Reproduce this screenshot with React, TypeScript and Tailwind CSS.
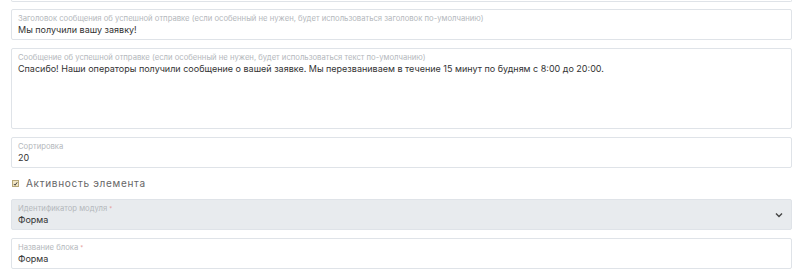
import React from "react";

function Field({ label, value, required, bg = "bg-white", tall = false, select = false }: { label: string; value: string; required?: boolean; bg?: string; tall?: boolean; select?: boolean }) {
  return (
    <div className={`relative border border-[#dfe3e8] rounded-[2px] ${bg} px-[6px] pt-[3px] ${tall ? "h-[81px]" : "h-[31px]"}`}>
      <div className="text-[7.7px] leading-[11px] text-[#b4b8bc] whitespace-nowrap">
        {label}
        {required && <span className="text-[#e59a9a] align-top text-[6px] ml-[2px]">*</span>}
      </div>
      <div className="text-[9px] leading-[12px] text-[#333] whitespace-nowrap">{value}</div>
      {select && (
        <svg className="absolute right-[8px] top-[12px]" width="8" height="6" viewBox="0 0 8 6">
          <path d="M1 1.5 L4 4.5 L7 1.5" stroke="#444" strokeWidth="1.4" fill="none" />
        </svg>
      )}
    </div>
  );
}

export default function App() {
  return (
    <div className="w-[800px] h-[275px] bg-white overflow-hidden px-[11px] pr-[8px]" style={{ fontFamily: "Inter, 'Open Sans', sans-serif" }}>
      <div className="h-[2px] border border-t-0 border-[#dfe3e8] rounded-b-[2px]" />
      <div className="flex flex-col gap-[8px] mt-[7px]">
        <Field label="Заголовок сообщения об успешной отправке (если особенный не нужен, будет использоваться заголовок по-умолчанию)" value="Мы получили вашу заявку!" />
        <Field tall label="Сообщение об успешной отправке (если особенный не нужен, будет использоваться текст по-умолчанию)" value="Спасибо! Наши операторы получили сообщение о вашей заявке. Мы перезваниваем в течение 15 минут по будням с 8:00 до 20:00." />
        <Field label="Сортировка" value="20" />
        <div className="flex items-center h-[15px] pl-[1px]">
          <div className="w-[7px] h-[7px] bg-[#f2e6c4] border border-[#b8a878] flex items-center justify-center">
            <svg width="6" height="6" viewBox="0 0 6 6"><path d="M1 3 L2.5 4.5 L5 1" stroke="#3a3a3a" strokeWidth="1.2" fill="none" /></svg>
          </div>
          <span className="ml-[7px] text-[10px] tracking-[0.7px] text-[#666]">Активность элемента</span>
        </div>
        <Field select bg="bg-[#e8ebee]" required label="Идентификатор модуля" value="Форма" />
        <Field required label="Название блока" value="Форма" />
      </div>
    </div>
  );
}
